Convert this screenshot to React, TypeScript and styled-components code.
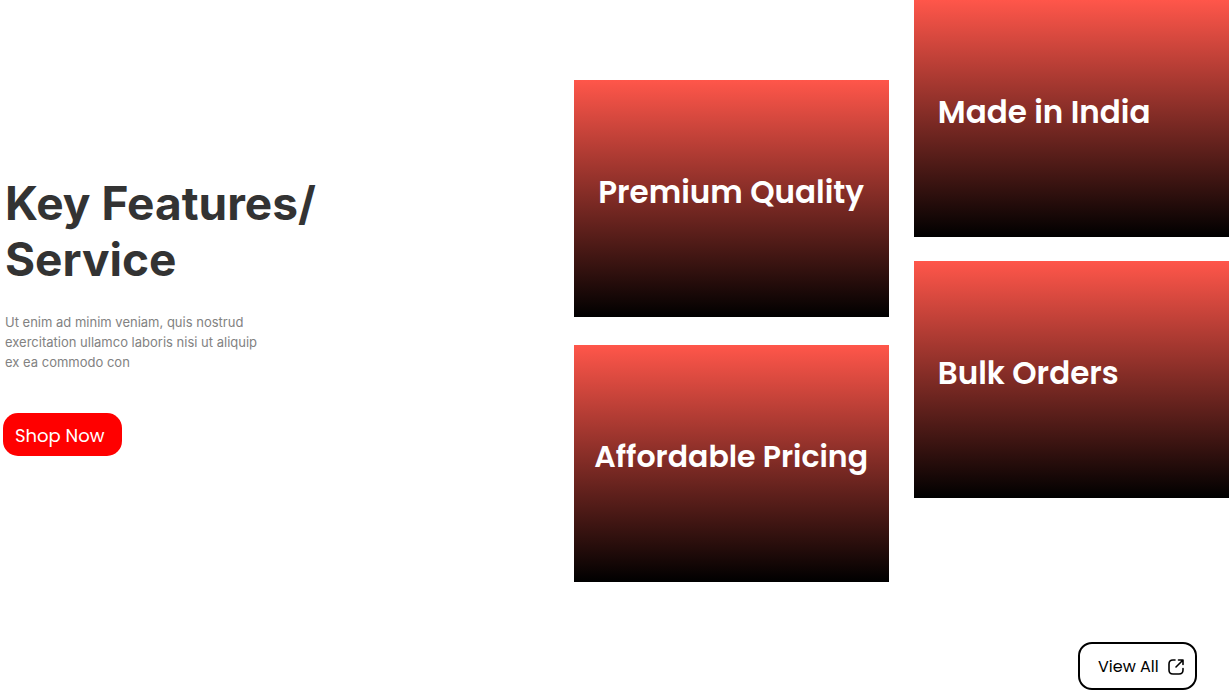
import React from "react";
import styled, { createGlobalStyle } from "styled-components";

const GlobalStyle = createGlobalStyle`
  *, *::before, *::after { box-sizing: border-box; }
  body { margin: 0; background: #fff; font-family: Inter, "Liberation Sans", sans-serif; }
`;

const displayFont = `Poppins, Inter, "Open Sans", sans-serif`;

const Page = styled.main`
  padding-right: 1px;
`;

const Features = styled.section`
  display: grid;
  grid-template-columns: 7fr 8fr;
`;

const Copy = styled.div`
  padding: 175px 3px 0;
`;

const Title = styled.h1`
  margin: 0;
  padding-left: 2px;
  max-width: 360px;
  color: #333;
  font-size: 46px;
  font-weight: 700;
  line-height: 56px;
`;

const Description = styled.p`
  margin: 25px 0 41px;
  padding-left: 2px;
  max-width: 266px;
  color: #828282;
  font-size: 13px;
  line-height: 20px;
`;

const ShopButton = styled.button`
  width: 119px;
  height: 43px;
  padding: 2px 0 0 12px;
  border: 0;
  border-radius: 15px;
  background: #f00;
  color: #fff;
  font-family: ${displayFont};
  font-size: 18px;
  line-height: 24px;
  text-align: left;
  white-space: nowrap;
  cursor: pointer;
`;

const Columns = styled.div`
  display: grid;
  grid-template-columns: 1fr 1fr;
  align-items: start;
  gap: 25px;
`;

const Column = styled.div<{ $offset: number; $gap: number }>`
  display: grid;
  gap: ${({ $gap }) => $gap}px;
  padding-top: ${({ $offset }) => $offset}px;
`;

const Card = styled.article<{ $centered?: boolean }>`
  display: flex;
  align-items: center;
  justify-content: ${({ $centered }) => ($centered ? "center" : "flex-start")};
  height: 237px;
  padding: 0 ${({ $centered }) => ($centered ? 0 : 24)}px;
  background: linear-gradient(180deg, #ff564a 0%, #000 100%);
`;

const CardTitle = styled.h2<{ $compact?: boolean }>`
  margin: 0;
  padding-bottom: 14px;
  color: #fff;
  font-family: ${displayFont};
  font-size: ${({ $compact }) => ($compact ? 30 : 31)}px;
  font-weight: 600;
  line-height: 40px;
  white-space: nowrap;
`;

const Footer = styled.footer`
  display: flex;
  justify-content: flex-end;
  padding: 60px 32px 1px 0;
`;

const ViewButton = styled.button`
  display: flex;
  align-items: center;
  justify-content: space-between;
  width: 119px;
  height: 48px;
  padding: 2px 10px 0 18px;
  border: 2px solid #000;
  border-radius: 14px;
  background: #fff;
  color: #000;
  font-family: ${displayFont};
  font-size: 16px;
  line-height: 24px;
  white-space: nowrap;
  cursor: pointer;
`;

function OpenIcon() {
  return (
    <svg width="18" height="18" viewBox="0 0 18 18" fill="none" stroke="#000" strokeWidth="1.6" strokeLinecap="round" strokeLinejoin="round" aria-hidden="true">
      <path d="M8 2H6Q2 2 2 6V12Q2 16 6 16H12Q16 16 16 12V10.5" />
      <path d="M9 9L15.8 2.2M11.5 2H16V6.5" />
    </svg>
  );
}

export default function App() {
  return (
    <Page>
      <GlobalStyle />
      <Features>
        <Copy>
          <Title>Key Features/ Service</Title>
          <Description>
            Ut enim ad minim veniam, quis nostrud exercitation ullamco laboris nisi ut aliquip ex ea commodo con
          </Description>
          <ShopButton type="button">Shop Now</ShopButton>
        </Copy>
        <Columns>
          <Column $offset={80} $gap={28}>
            <Card $centered><CardTitle>Premium Quality</CardTitle></Card>
            <Card $centered><CardTitle $compact>Affordable Pricing</CardTitle></Card>
          </Column>
          <Column $offset={0} $gap={24}>
            <Card><CardTitle>Made in India</CardTitle></Card>
            <Card><CardTitle>Bulk Orders</CardTitle></Card>
          </Column>
        </Columns>
      </Features>
      <Footer>
        <ViewButton type="button">
          View All
          <OpenIcon />
        </ViewButton>
      </Footer>
    </Page>
  );
}
